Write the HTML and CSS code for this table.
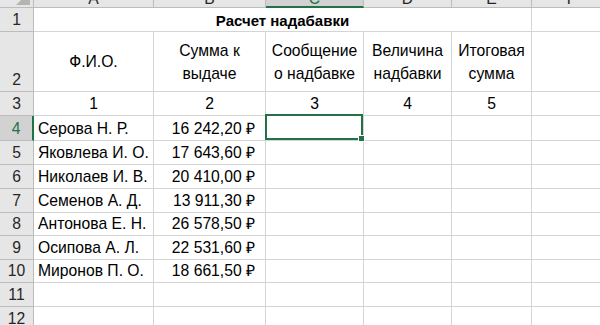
FILE: index.html
```html
<!DOCTYPE html>
<html lang="ru">
<head>
<meta charset="utf-8">
<title>Расчет надабавки</title>
<link rel="stylesheet" href="styles.css">
</head>
<body>
<div class="sheet">
  <div class="corner"><span class="tri"></span></div>
  <div class="ch">A</div>
  <div class="ch">B</div>
  <div class="ch ch-sel">C</div>
  <div class="ch">D</div>
  <div class="ch">E</div>
  <div class="ch ch-last">F</div>

  <div class="rh">1</div>
  <div class="c title span5">Расчет надабавки</div>
  <div class="c"></div>

  <div class="rh">2</div>
  <div class="c hd">Ф.И.О.</div>
  <div class="c hd">Сумма к выдаче</div>
  <div class="c hd">Сообщение о надбавке</div>
  <div class="c hd">Величина надбавки</div>
  <div class="c hd">Итоговая сумма</div>
  <div class="c"></div>

  <div class="rh">3</div>
  <div class="c ctr">1</div>
  <div class="c ctr">2</div>
  <div class="c ctr">3</div>
  <div class="c ctr">4</div>
  <div class="c ctr">5</div>
  <div class="c"></div>

  <div class="rh rh-sel">4</div>
  <div class="c txt">Серова Н. Р.</div>
  <div class="c num">16&nbsp;242,20&nbsp;₽</div>
  <div class="c active"><span class="sel"><span class="handle"></span></span></div>
  <div class="c"></div>
  <div class="c"></div>
  <div class="c"></div>

  <div class="rh">5</div>
  <div class="c txt">Яковлева И. О.</div>
  <div class="c num">17&nbsp;643,60&nbsp;₽</div>
  <div class="c"></div>
  <div class="c"></div>
  <div class="c"></div>
  <div class="c"></div>

  <div class="rh">6</div>
  <div class="c txt">Николаев И. В.</div>
  <div class="c num">20&nbsp;410,00&nbsp;₽</div>
  <div class="c"></div>
  <div class="c"></div>
  <div class="c"></div>
  <div class="c"></div>

  <div class="rh">7</div>
  <div class="c txt">Семенов А. Д.</div>
  <div class="c num">13&nbsp;911,30&nbsp;₽</div>
  <div class="c"></div>
  <div class="c"></div>
  <div class="c"></div>
  <div class="c"></div>

  <div class="rh">8</div>
  <div class="c txt">Антонова Е. Н.</div>
  <div class="c num">26&nbsp;578,50&nbsp;₽</div>
  <div class="c"></div>
  <div class="c"></div>
  <div class="c"></div>
  <div class="c"></div>

  <div class="rh">9</div>
  <div class="c txt">Осипова А. Л.</div>
  <div class="c num">22&nbsp;531,60&nbsp;₽</div>
  <div class="c"></div>
  <div class="c"></div>
  <div class="c"></div>
  <div class="c"></div>

  <div class="rh">10</div>
  <div class="c txt">Миронов П. О.</div>
  <div class="c num">18&nbsp;661,50&nbsp;₽</div>
  <div class="c"></div>
  <div class="c"></div>
  <div class="c"></div>
  <div class="c"></div>

  <div class="rh">11</div>
  <div class="c"></div>
  <div class="c"></div>
  <div class="c"></div>
  <div class="c"></div>
  <div class="c"></div>
  <div class="c"></div>

  <div class="rh">12</div>
  <div class="c"></div>
  <div class="c"></div>
  <div class="c"></div>
  <div class="c"></div>
  <div class="c"></div>
  <div class="c"></div>
</div>
</body>
</html>
```
FILE: styles.css
```css
html, body {
  margin: 0;
  padding: 0;
  background: #ffffff;
}
body {
  width: 600px;
  height: 325px;
  overflow: hidden;
  font-family: "Liberation Sans", Arial, sans-serif;
  font-size: 15.7px;
  color: #000000;
}
.sheet {
  display: grid;
  grid-template-columns: 34px 120px 112px 98px 88px 80px 80px;
  grid-template-rows: 8px 24px 60px 24px 25px 24px 24px 24px 23px 24px 23px 24px 24px;
}
.sheet > div {
  box-sizing: border-box;
  border-right: 1px solid #d4d4d4;
  border-bottom: 1px solid #d4d4d4;
  overflow: hidden;
  white-space: nowrap;
}
.corner {
  background: #e6e6e6;
  position: relative;
  border-right-color: #bcbcbc !important;
  border-bottom-color: #bcbcbc !important;
}
.tri {
  position: absolute;
  right: 3px;
  bottom: 2px;
  width: 0;
  height: 0;
  border-left: 14px solid transparent;
  border-bottom: 14px solid #b4b4b4;
}
.ch {
  background: #e6e6e6;
  border-right-color: #bcbcbc !important;
  border-bottom-color: #bcbcbc !important;
  display: flex;
  justify-content: center;
  align-items: flex-end;
  line-height: 14px;
  padding-bottom: 1px;
  color: #262626;
}
.ch-sel {
  background: #d2d2d2;
  color: #217346;
  border-bottom: 2px solid #217346 !important;
  padding-bottom: 0;
}
.rh {
  background: #e6e6e6;
  border-right-color: #bcbcbc !important;
  border-bottom-color: #bcbcbc !important;
  display: flex;
  justify-content: center;
  align-items: flex-end;
  line-height: 20px;
  padding-bottom: 1px;
  color: #262626;
}
.rh-sel {
  background: #d2d2d2;
  color: #217346;
  border-right: 2px solid #217346 !important;
}
.c {
  display: flex;
  align-items: flex-end;
  line-height: 20px;
  padding-bottom: 1px;
}
.span5 {
  grid-column: span 5;
}
.title {
  justify-content: center;
  font-weight: bold;
  font-size: 15px;
  padding-bottom: 0;
}
.hd {
  white-space: normal !important;
  text-align: center;
  justify-content: center;
  align-items: center;
  line-height: 23px;
  padding: 0 1px;
}
.ctr {
  justify-content: center;
}
.txt {
  padding-left: 4px;
}
.num {
  justify-content: flex-end;
  padding-right: 10px;
}
.active {
  position: relative;
  overflow: visible !important;
}
.sel {
  position: absolute;
  left: -1px;
  top: -2px;
  right: 0;
  bottom: 0;
  border: 2px solid #217346;
  z-index: 2;
}
.handle {
  position: absolute;
  right: -4px;
  bottom: -4px;
  width: 5px;
  height: 5px;
  background: #217346;
  border: 1px solid #ffffff;
}
```
